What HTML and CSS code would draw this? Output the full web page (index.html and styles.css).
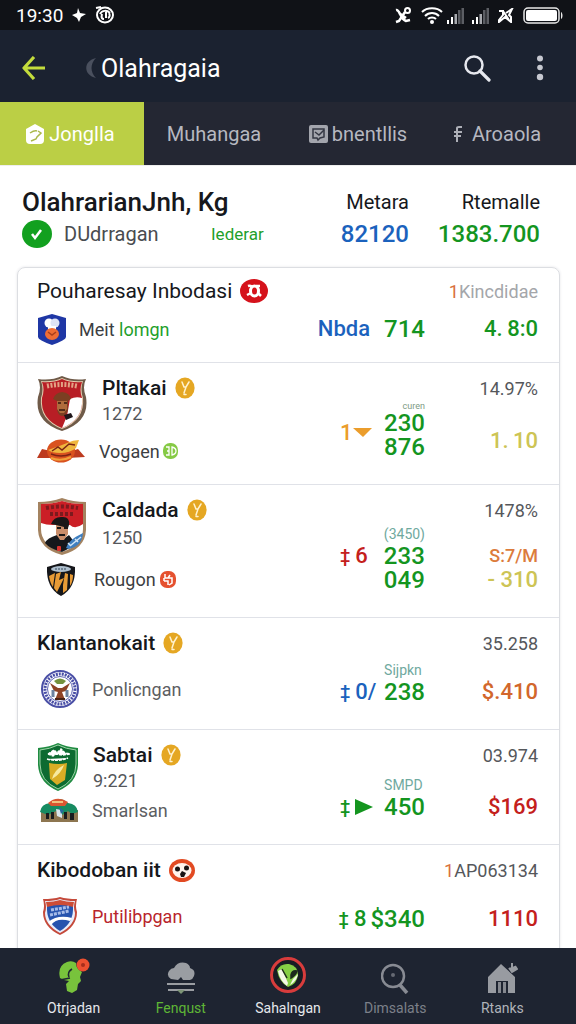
FILE: index.html
```html
<!DOCTYPE html>
<html lang="id">
  <head>
    <meta charset="utf-8"/>
    <meta name="viewport" content="width=device-width, initial-scale=1">
    <title>Olahragaia</title>
    <link rel="stylesheet" href="styles.css">
  </head>
  <body>
    <!-- gold coin used next to the team names -->
    <svg class="defs" width="0" height="0" aria-hidden="true">
      <symbol id="coin" viewBox="0 0 20 22">
        <ellipse cx="10" cy="11" rx="9.6" ry="10.6" fill="#e5a723"/>
        <path d="M7 5l2 5 2 0 3-5M11 10l-2 6M9 17.500h2" fill="none" stroke="#fff2cf" stroke-width="1.500" stroke-linecap="round"/>
      </symbol>
      <symbol id="signal" viewBox="0 0 18 17">
        <path d="M1 13h2v4H1zM5 10h2v7H5z" fill="#fff"/>
        <path d="M8.500 7h2.500v10H8.500z" fill="#a9abb0"/>
        <path d="M12 3h2.500v14H12zM15.500 1H18v16h-2.500z" fill="#5c5e64"/>
      </symbol>
    </svg>

    <div class="status">
      <span class="clock">19:30</span>
      <svg width="14" height="14" viewBox="0 0 14 14"><path d="M6 0l2 5 6 1-5 3-2 5-2-4-5-3 5-2z" fill="#fff"/></svg>
      <svg width="20" height="18" viewBox="0 0 20 18">
        <ellipse cx="10" cy="9" rx="8" ry="7.500" fill="none" stroke="#fff" stroke-width="2"/>
        <path d="M1 2l5-1M5 8c2-4 7-4 10-1M7 8c-1 4 0 5 2 5M11 6v6M14 7c1 2 1 4-1 5" fill="none" stroke="#fff" stroke-width="2"/>
      </svg>
      <span class="spacer"></span>
      <svg width="17" height="17" viewBox="0 0 17 17"><path d="M1 3c4-1 4 9 10 11l4-1M1 15l3-1 6-9M4 6l7 5" fill="none" stroke="#fff" stroke-width="2.500"/><circle cx="12.500" cy="3.500" r="2.500" fill="none" stroke="#fff" stroke-width="2"/></svg>
      <svg width="22" height="17" viewBox="0 0 22 17"><path d="M1 5c5-5 15-5 20 0M4 9c4-4 10-4 14 0M7 12c2-2 6-2 8 0" fill="none" stroke="#fff" stroke-width="2"/><circle cx="11" cy="15" r="2" fill="#fff"/></svg>
      <svg class="sim1" width="18" height="17"><use href="#signal"/></svg>
      <svg width="18" height="17"><use href="#signal"/></svg>
      <svg width="16" height="15" viewBox="0 0 16 15"><path d="M1 3h4v4l-4 5v2l6-5 6 5V9l-2-2 3-6-6 4M5 3l6 9" fill="none" stroke="#fff" stroke-width="2"/></svg>
      <svg width="40" height="17" viewBox="0 0 40 17"><rect x="1" y="1" width="35" height="15" rx="4" fill="none" stroke="#e8e8e8" stroke-width="1.500"/><rect x="3" y="3" width="31" height="11" rx="2" fill="#fff"/><path d="M38 5c2 1 2 6 0 7z" fill="#e8e8e8"/></svg>
    </div>

    <header class="header">
      <button class="icon-btn" aria-label="Kembali">
        <svg width="24" height="24" viewBox="0 0 24 24"><path d="M12 1L2 12l10 11M2 12h21" fill="none" stroke="#c3dc3c" stroke-width="3.200" stroke-linejoin="round"/></svg>
      </button>
      <svg class="crescent" width="12" height="22" viewBox="0 0 12 22"><path d="M11 1C-2 4-2 18 11 21C5 15 5 7 11 1z" fill="#4a505e"/></svg>
      <h1>Olahragaia</h1>
      <button class="icon-btn search" aria-label="Cari">
        <svg width="27" height="27" viewBox="0 0 27 27"><circle cx="10" cy="10" r="8.500" fill="none" stroke="#e6e8ee" stroke-width="2.500"/><path d="M16 16l9 9" stroke="#e6e8ee" stroke-width="3.200" stroke-linecap="round"/></svg>
      </button>
      <button class="icon-btn" aria-label="Menu">
        <svg width="8" height="26" viewBox="0 0 8 26"><g fill="#c6c8d0"><circle cx="4" cy="3.500" r="3"/><circle cx="4" cy="12.500" r="2.800"/><circle cx="4" cy="22" r="3.200"/></g></svg>
      </button>
    </header>

    <nav class="tabs">
      <a href="#" class="tab active">
        <svg width="20" height="20" viewBox="0 0 20 20"><path d="M1 5l9-5 9 5v11q0 4-4 4H5q-4 0-4-4z" fill="#fff"/><path d="M5 9c3-2 5-3 7-2M13 7l3 2-4 4-1 2-5 2" fill="none" stroke="#a9b84a" stroke-width="1.500"/></svg>
        Jonglla
      </a>
      <a href="#" class="tab">Muhangaa</a>
      <a href="#" class="tab">
        <svg width="19" height="18" viewBox="0 0 19 18"><rect width="19" height="18" rx="2" fill="#a3a5ad"/><path d="M4 4h11v8l-4 1-2 2-1-2H4z" fill="none" stroke="#343743" stroke-width="1.500"/><path d="M6 7l4 3 5-5" fill="none" stroke="#343743" stroke-width="1.500"/></svg>
        bnentllis
      </a>
      <a href="#" class="tab wide-gap">
        <svg width="10" height="16" viewBox="0 0 10 16"><path d="M4 16V2q0-1 2-1h3M1 6h8M1 10h7" fill="none" stroke="#adafb7" stroke-width="2"/></svg>
        Aroaola
      </a>
    </nav>

    <main class="main">
      <section class="summary">
        <div class="sum-left">
          <h2>OlahrarianJnh, Kg</h2>
          <div class="sum-sub">
            <svg width="30" height="28" viewBox="0 0 30 28"><ellipse cx="15" cy="14" rx="15" ry="14" fill="#12a01f"/><path d="M10 14l3 4 6-8" fill="none" stroke="#fff" stroke-width="2.500"/></svg>
            <span class="sum-name">DUdrragan</span>
            <span class="tag">Iederar</span>
          </div>
        </div>
        <div class="sum-col">
          <div class="label">Metara</div>
          <div class="num blue">82120</div>
        </div>
        <div class="sum-col last">
          <div class="label">Rtemalle</div>
          <div class="num green">1383.700</div>
        </div>
      </section>

      <section class="card">
        <div class="row">
          <div class="left">
            <h3 class="plain">Pouharesay Inbodasi
              <svg width="28" height="24" viewBox="0 0 28 24"><ellipse cx="14" cy="12" rx="14" ry="12" fill="#d5121b"/><path d="M8 7q3-1 4 1M7 16l4-2M16 7l4 0M18 14l3 3" fill="none" stroke="#fff" stroke-width="2.500"/><ellipse cx="14.500" cy="12" rx="4" ry="5" fill="none" stroke="#fff" stroke-width="3"/></svg>
            </h3>
            <div class="team tight">
              <svg width="30" height="31" viewBox="0 0 30 31"><path d="M15 0l14 4v19q0 3-14 8Q1 26 1 23V4z" fill="#1f37a5"/><circle cx="12" cy="9" r="4.500" fill="#fff"/><circle cx="18" cy="9" r="4.500" fill="#dfe4f5"/><path d="M11 12h8v4h-8z" fill="#fff"/><ellipse cx="15" cy="20" rx="7" ry="6" fill="#ef6d34"/><path d="M11 18l4 3 4-3" fill="none" stroke="#a83e1c" stroke-width="1.500"/></svg>
              <span>Meit <b class="green-text">lomgn</b></span>
            </div>
          </div>
          <div class="mid one"><span class="mark blue">Nbda</span><span class="num green">714</span></div>
          <div class="right">
            <div class="stat faded"><i>1</i>Kincdidae</div>
            <div class="val green">4.&thinsp;8:0</div>
          </div>
        </div>

        <div class="row">
          <div class="left">
            <div class="head">
              <svg width="50" height="55" viewBox="0 0 50 55">
                <path d="M1 3q13 2 24-3q11 5 24 3q-4 8 0 18q4 25-24 34Q-3 46 1 21Q5 11 1 3z" fill="#6f5a48"/>
                <path d="M4 5q12 1 21-3q9 4 21 3q-3 8 0 17q2 22-21 31Q2 44 4 22Q7 13 4 5z" fill="#e5cdb0"/>
                <path d="M5 6q11 1 20-3q9 4 20 3q-3 8 0 16q2 21-20 30Q3 43 5 22Q8 13 5 6z" fill="#b81e25"/>
                <path d="M33 23q6-3 12-1q2 21-20 30l5-12z" fill="#fff"/>
                <path d="M10 10q15-3 30 0" fill="none" stroke="#e2a385" stroke-width="5" stroke-dasharray="2 1.500"/>
                <path d="M16 23q2-6 9-7q8 1 9 7l-3 2v9q-2 6-6 6t-5-7v-8z" fill="#7b3f22"/>
                <path d="M20 25h10v8l-3 4h-4l-3-4z" fill="#b06b3c"/>
                <path d="M21 27h3M27 27h3M22 34h6" stroke="#35180f" stroke-width="1.500"/>
                <path d="M27 39l7-2 2 4-7 3z" fill="#20161a"/>
              </svg>
              <div>
                <h3>Pltakai <svg width="20" height="22"><use href="#coin"/></svg></h3>
                <p>1272</p>
              </div>
            </div>
            <div class="team wide">
              <svg width="48" height="24" viewBox="0 0 48 24"><path d="M0 19l5-9 9 2 2 7zM48 18l-7-8-9 3-2 6z" fill="#bd3b20"/><ellipse cx="24" cy="12" rx="14" ry="11.500" fill="#d9521f"/><path d="M11 11q12-4 19-7 6-3 12-3l-3 8q-6 5-16 5-8 0-12-3z" fill="#efb63f"/><path d="M15 12l6-4 4 3 7-6 6 1M14 15q10 4 20 0" fill="none" stroke="#7c2415" stroke-width="1.500"/><path d="M14 19q10 4 20-1" fill="none" stroke="#f2a03a" stroke-width="2"/></svg>
              <span>Vogaen</span>
              <svg class="dot" width="15" height="16" viewBox="0 0 15 16"><rect width="15" height="16" rx="7" fill="#86ca45"/><path d="M3 4h3v8H3M4 8h2M9 4v8q4-1 4-4t-4-4z" fill="none" stroke="#fff" stroke-width="1.300"/></svg>
            </div>
          </div>
          <div class="mid">
            <span class="mark orange">1<svg width="19" height="10" viewBox="0 0 19 10"><path d="M0 0h19L10 9z" fill="#eb9d2c"/></svg></span>
            <div class="nums"><small class="tiny">curen</small><span class="num green">230</span><span class="num green">876</span></div>
          </div>
          <div class="right">
            <div class="stat">14.97%</div>
            <div class="val lime tall">1.&thinsp;10</div>
          </div>
        </div>

        <div class="row">
          <div class="left">
            <div class="head">
              <svg width="50" height="57" viewBox="0 0 50 57">
                <path d="M1 4Q14 4 25 0q11 4 24 4v28q-1 19-24 25Q2 51 1 32z" fill="#a48360"/>
                <path d="M4 6q12 0 21-3q9 3 21 3v25q0 16-21 23Q4 47 4 31z" fill="#fff"/>
                <path d="M4 6q12 0 21-3q9 3 21 3v20q-8 6-13 1-14-1-17 0-7 0-12-2z" fill="#cb1f26"/>
                <path d="M9 10q16-3 32 0M13 16h25" fill="none" stroke="#7c1a1e" stroke-width="4" stroke-dasharray="3 2"/>
                <path d="M8 45q2-5 12-8l5 5 7-5 6 8q-4 5-13 9Q13 51 8 45z" fill="#15171b"/>
                <path d="M19 26h12v10l-4 6h-4l-4-6z" fill="#c98d6a"/>
                <path d="M14 26q3-8 12-7 7 0 6 8l-1 3-12-3z" fill="#1a1718"/>
                <path d="M20 30h4M27 30h4M22 37h6" stroke="#1a1718" stroke-width="2"/>
                <path d="M29 50q2-8 17-15-1 13-14 16z" fill="#3f7fc0"/><path d="M33 48l11-9M31 45l3 3M38 41l3 3" stroke="#d3e6f5" stroke-width="1.500"/>
                <rect x="20" y="48" width="4" height="5" rx="1" fill="#d9332f"/>
              </svg>
              <div>
                <h3>Caldada <svg width="20" height="22"><use href="#coin"/></svg></h3>
                <p class="low">1250</p>
              </div>
            </div>
            <div class="team">
              <svg width="48" height="33" viewBox="0 0 48 33"><path d="M24 0l14 4q1 21-14 29Q9 25 10 4z" fill="#15161a"/><path d="M12 13l6-3-2 14q-3-4-4-11zM19 11l5-2-2 8 5-2-7 14-3-4zM28 10l3 1-1 16-4 3v-8zM33 11l3 1q0 7-3 11z" fill="#e79b36"/><ellipse cx="24" cy="6" rx="10" ry="3" fill="#aebfce"/><path d="M18 6h12" stroke="#34495b" stroke-dasharray="2 1"/></svg>
              <span>Rougon</span>
              <svg class="dot" width="16" height="17" viewBox="0 0 16 17"><rect width="16" height="17" rx="7" fill="#e5512f"/><path d="M5 3v4h4M4 10h4v4M10 4l-2 3h4v5l-3 2M4 7v3" fill="none" stroke="#fff" stroke-width="1.500"/></svg>
            </div>
          </div>
          <div class="mid">
            <span class="mark red high"><small>‡</small>6</span>
            <div class="nums"><small>(3450)</small><span class="num green">233</span><span class="num green">049</span></div>
          </div>
          <div class="right">
            <div class="stat">1478%</div>
            <div><div class="val amber">S:7/M</div><div class="val lime">- 310</div></div>
          </div>
        </div>

        <div class="row">
          <div class="left">
            <h3 class="plain">Klantanokait <svg width="20" height="22"><use href="#coin"/></svg></h3>
            <div class="team">
              <svg width="46" height="38" viewBox="0 0 46 38"><circle cx="23" cy="19" r="18" fill="#fff" stroke="#4a4fa6" stroke-width="2"/><circle cx="23" cy="19" r="15" fill="none" stroke="#4a4fa6" stroke-width="3" stroke-dasharray="2 1"/><circle cx="23" cy="19" r="12.500" fill="#fff" stroke="#6268b5"/><path d="M17 11q6-5 12 0l-3 3h-6z" fill="#75923e"/><path d="M13 13l8 5h4l8-5-4 8-4 1 3 8H18l3-8-4-1z" fill="#8e4326"/><path d="M16 20v7M30 20v7" stroke="#6d83a1" stroke-width="3"/><path d="M18 29h10" stroke="#492315" stroke-width="2"/></svg>
              <span class="grey">Ponlicngan</span>
            </div>
          </div>
          <div class="mid">
            <span class="mark blue"><small>‡</small>0/</span>
            <div class="nums"><small>Sijpkn</small><span class="num green">238</span></div>
          </div>
          <div class="right">
            <div class="stat">35.258</div>
            <div class="val amber-dark">$.410</div>
          </div>
        </div>

        <div class="row">
          <div class="left">
            <div class="head short">
              <svg width="42" height="48" viewBox="0 0 42 48">
                <path d="M1 5Q13 4 21 0q8 4 20 5v17q-1 18-20 26Q2 40 1 22z" fill="#1f8b41"/>
                <path d="M3 7q10-1 18-5q8 4 18 5v14q0 17-18 25Q3 38 3 21z" fill="#0d6b31" stroke="#9ed3a8"/>
                <path d="M11 11l6-4 3 3 4-4 4 4 5 1-8 1-6-1-3 2zM10 16q11 3 21-1" fill="#fff" stroke="#fff" stroke-width="1.500" stroke-dasharray="3 1"/>
                <path d="M12 20q10 2 18 0l-2 17-8 5-7-6z" fill="#d9ad25"/><path d="M27 22q-10 5-12 14 9-5 12-14z" fill="#f7e9a0"/>
              </svg>
              <div>
                <h3>Sabtai <svg width="20" height="22"><use href="#coin"/></svg></h3>
                <p>9:221</p>
              </div>
            </div>
            <div class="team">
              <svg width="46" height="25" viewBox="-2 0 46 25"><path d="M2 12h37v12H2z" fill="#8d7650"/><path d="M1 14Q2 6 11 5q9-8 18 0 9 1 10 9l-6 2-4-3-6 4-6-4-8 4z" fill="#178b61"/><path d="M9 5q9-8 20-1l-3 4H12z" fill="#db5631"/><path d="M13 4h11" stroke="#f0c27e" stroke-width="2"/><path d="M17 11l6 1v8l-5-2z" fill="#d8e5ed"/><path d="M7 15h3v6H7zM12 14h3v7h-3zM25 14h3v7h-3zM31 15h4v7h-4z" fill="#191c1e"/><path d="M20 9l5 4-3 3z" fill="#286b9d"/></svg>
              <span class="grey">Smarlsan</span>
            </div>
          </div>
          <div class="mid">
            <span class="mark green"><small>‡</small><svg width="18" height="16" viewBox="0 0 18 16"><path d="M0 0l18 8L0 16z" fill="#14951f"/></svg></span>
            <div class="nums"><small>SMPD</small><span class="num green">450</span></div>
          </div>
          <div class="right">
            <div class="stat">03.974</div>
            <div class="val red">$169</div>
          </div>
        </div>

        <div class="row">
          <div class="left">
            <h3 class="plain">Kibodoban iit
              <svg width="26" height="23" viewBox="0 0 26 23"><ellipse cx="13" cy="11.500" rx="13" ry="11.500" fill="#e24a22"/><ellipse cx="13" cy="11.500" rx="9.500" ry="7.500" fill="#fff4ed"/><circle cx="8.500" cy="10" r="2.500" fill="#191313"/><circle cx="17.500" cy="9" r="2.500" fill="#191313"/><path d="M11 15l2-3 4 2-2 4h-3z" fill="#191313"/></svg>
            </h3>
            <div class="team">
              <svg width="46" height="38" viewBox="0 0 46 38"><path d="M6 2q10 0 17-2 7 2 17 2-2 7 0 13 0 15-17 23Q6 30 6 15 8 9 6 2z" fill="#c54a3b"/><path d="M8 4q9 0 15-2 6 2 15 2-2 6 0 12 0 12-15 20Q8 28 8 16 10 10 8 4z" fill="#e8edfa"/><path d="M10 9q13-3 26 0 1 17-13 25Q9 26 10 9z" fill="#2653ae"/><path d="M9 5q8 0 14-2 6 2 14 2l-1 5q-13-4-26 0z" fill="#cd4d36"/><path d="M14 13l18-3M13 18l19-4" stroke="#a7bce8" stroke-width="3" stroke-dasharray="3 1"/><path d="M11 25q10-8 24-4l-2 3q-13-4-19 4z" fill="#fff"/></svg>
              <span class="crimson">Putilibpgan</span>
            </div>
          </div>
          <div class="mid one close"><span class="mark green"><small>‡</small>8</span><span class="num green">$340</span></div>
          <div class="right">
            <div class="stat"><i>1</i>AP063134</div>
            <div class="val red">1110</div>
          </div>
        </div>
      </section>
    </main>

    <nav class="bottom">
      <a href="#">
        <svg width="32" height="36" viewBox="0 0 32 36"><path d="M2 20Q-1 8 9 4q5-2 9 1 0 6 6 9l-2 5 1 4-3 3-1 6-5 3-5-2-1-7 3-3-5-1z" fill="#78c33c"/><path d="M14 11q-5 3-3 8M2 22l10-2" fill="none" stroke="#1e2633" stroke-width="1.500"/><circle cx="25" cy="7" r="6.500" fill="#ec5030"/><circle cx="25" cy="7" r="2" fill="#a72e1c"/></svg>
        Otrjadan
      </a>
      <a href="#" class="lit">
        <svg width="28" height="32" viewBox="0 0 28 32"><path d="M4 17q-5-3-2-8 2-3 5-3 4-7 12-5 4 2 4 5 6 2 4 8-1 3-4 4h-7l-2-3-3 3z" fill="#9a9da2"/><path d="M0 22h28M1 28h26" stroke="#9a9da2" stroke-width="2"/><path d="M10 28h8l-4 4z" fill="#7d9476"/></svg>
        Fenqust
      </a>
      <a href="#">
        <svg width="38" height="38" viewBox="0 0 38 38"><circle cx="19" cy="19" r="16.500" fill="#191d24" stroke="#d83c3c" stroke-width="3"/><path d="M8 14q4-7 12-6 9 2 9 11-1 9-10 12-9-5-11-17z" fill="#86cf45"/><path d="M9 15l4-2 6 14-1 3q-7-5-9-15z" fill="#f4f8e8"/><path d="M21 29q7-4 8-11l-5 5z" fill="#f4f8e8"/><path d="M13 13l5 9M22 19q1-5 6-4-1 4-6 7z" fill="#1c2a1c" stroke="#1c2a1c" stroke-width="1.500"/></svg>
        Sahalngan
      </a>
      <a href="#" class="dim">
        <svg width="28" height="31" viewBox="0 0 28 31"><circle cx="12" cy="13" r="11" fill="none" stroke="#888b93" stroke-width="2.500"/><circle cx="12" cy="12" r="2" fill="#666a73"/><path d="M19 22l7 8" stroke="#888b93" stroke-width="3.500"/></svg>
        Dimsalats
      </a>
      <a href="#" class="soft">
        <svg width="31" height="31" viewBox="0 0 31 31"><path d="M1 14L14 1l14 13v16h-7V18H9v12H1z" fill="#989ba1"/><path d="M11 19h3v11h-3zM16 19h3v11h-3z" fill="#85888f"/><path d="M25 0v8M22 5l3 4 5-3-2-3" fill="#989ba1" stroke="#989ba1" stroke-width="2"/></svg>
        Rtanks
      </a>
    </nav>
  </body>
</html>
```

FILE: styles.css
```css
html, body {
  height: 100%;
  margin: 0;
}
body {
  display: flex;
  flex-direction: column;
  background-color: #fff;
  color: #16181c;
  font-family: Roboto, "Liberation Sans", sans-serif;
}
svg {
  display: block;
  flex: none;
}
.defs {
  position: absolute;
}
a {
  color: inherit;
  text-decoration: none;
}
h1, h2, h3, p {
  margin: 0;
  font-weight: 500;
}

/* status bar */
.status {
  display: flex;
  flex: none;
  align-items: center;
  gap: 9px;
  height: 30px;
  padding: 0 13px 0 16px;
  background-color: #101217;
  color: #fff;
}
.clock {
  font-size: 19px;
}
.spacer {
  flex: 1;
}
.sim1 {
  margin: 0 -2px 0 -6px;
}

/* header */
.header {
  display: flex;
  flex: none;
  align-items: center;
  height: 68px;
  padding: 4px 32px 0 22px;
  background-color: #1b2230;
  color: #fff;
}
.header h1 {
  flex: 1;
  font-size: 25px;
  font-weight: 400;
}
.icon-btn {
  padding: 0;
  border: 0;
  background: none;
  cursor: pointer;
}
.crescent {
  margin: 0 4px 0 39px;
}
.search {
  margin-right: 45px;
}
.tabs {
  display: flex;
  flex: none;
  height: 63px;
  background-color: #242733;
  border-bottom: #eee 1px solid;
}
.tab {
  display: flex;
  align-items: center;
  justify-content: center;
  box-sizing: border-box;
  gap: 4px;
  width: 25%;
  padding-right: 4px;
  color: #b6b8c0;
  font-size: 20px;
}
.tab.wide-gap {
  gap: 9px;
  padding-right: 14px;
}
.tab.active {
  background-color: #bbcf45;
  color: #fff;
}

/* summary */
.main {
  flex: 1;
  min-height: 0;
  overflow: hidden;
}
.summary {
  display: flex;
  padding: 22px 36px 15px 22px;
}
.sum-left {
  flex: 1;
}
.summary h2 {
  font-size: 26px;
  line-height: 28px;
  white-space: nowrap;
}
.sum-sub {
  display: flex;
  align-items: center;
  height: 36px;
  color: #4a4c50;
  font-size: 20px;
}
.sum-name {
  width: 147px;
  margin-left: 12px;
}
.tag {
  color: #1fa02c;
  font-size: 17px;
}
.sum-col {
  text-align: right;
}
.sum-col.last {
  width: 131px;
}
.label {
  font-size: 20px;
  line-height: 28px;
}
.sum-col .num {
  line-height: 36px;
}
.num {
  font-size: 24px;
  font-weight: 500;
  line-height: 24px;
}
.green { color: #14951f; }
.blue { color: #1b62bd; }
.red { color: #c4201c; }
.orange { color: #eb9d2c; }
.lime { color: #cdc455; }
.amber { color: #dc7c3c; }
.amber-dark { color: #d2672c; }

/* list */
.card {
  margin: 0 16px 0 17px;
  border: #dcdee2 1px solid;
  border-radius: 8px;
  box-shadow: 0 0 3px #e4e4e8;
}
.row {
  display: flex;
  padding: 13px 21px 21px 19px;
  border-bottom: #e0e2e8 1px solid;
}
.row:first-child {
  padding-top: 11px;
  padding-bottom: 17px;
}
.left {
  flex: 1;
}
.left h3 {
  display: flex;
  align-items: center;
  gap: 8px;
  font-size: 21px;
  line-height: 24px;
  white-space: nowrap;
}
.left h3.plain {
  margin-bottom: 15px;
}
.row:first-child h3 {
  margin-bottom: 11px;
  font-weight: 400;
}
.head {
  display: flex;
  gap: 15px;
  margin-bottom: 8px;
}
.head.short {
  gap: 14px;
  margin-bottom: 3px;
}
.head p {
  color: #55575b;
  font-size: 18px;
  font-weight: 400;
  line-height: 28px;
}
.head p.low {
  line-height: 32px;
}
.team {
  display: flex;
  align-items: center;
  gap: 9px;
  color: #3c3e42;
  font-size: 18px;
}
.team.tight {
  gap: 12px;
}
.team.wide {
  gap: 14px;
}
.team .dot {
  margin-left: -5px;
}
.team.wide .dot {
  margin-left: -11px;
}
.team .grey {
  color: #5c5e62;
}
.team .crimson {
  color: #b8252c;
}
.green-text {
  color: #1fa02c;
  font-weight: 400;
}
.mid {
  display: flex;
  align-items: flex-end;
  justify-content: space-between;
  width: 85px;
  padding-bottom: 4px;
}
.mid.one {
  width: auto;
  gap: 14px;
}
.mid.close {
  gap: 4px;
}
.mark {
  display: flex;
  align-items: center;
  gap: 5px;
  font-size: 22px;
  font-weight: 500;
  line-height: 24px;
}
.mark small {
  font-size: 18px;
}
.mark.high {
  padding-bottom: 24px;
}
.mark.orange {
  gap: 0;
  padding-bottom: 14px;
}
.nums {
  display: flex;
  flex-direction: column;
}
.nums small {
  color: #6fa99e;
  font-size: 14px;
  line-height: 20px;
}
.nums .tiny {
  color: #7d9a84;
  font-size: 9px;
  line-height: 10px;
  text-align: right;
}
.right {
  display: flex;
  flex-direction: column;
  justify-content: space-between;
  width: 113px;
  padding-bottom: 4px;
  text-align: right;
}
.stat {
  color: #55575b;
  font-size: 18px;
  line-height: 26px;
}
.stat.faded {
  color: #a4a6aa;
}
.stat i {
  color: #d9713c;
  font-style: normal;
}
.val {
  font-size: 22px;
  font-weight: 500;
  line-height: 24px;
}
.val.tall {
  line-height: 36px;
}
.val.amber {
  font-size: 18px;
}

/* bottom bar */
.bottom {
  display: flex;
  flex: none;
  height: 76px;
  padding: 0 20px;
  background-color: #1e2431;
  color: #e6e8ec;
  font-size: 14px;
}
.bottom a {
  display: flex;
  flex: 1;
  flex-direction: column;
  align-items: center;
  justify-content: flex-end;
  gap: 6px;
  padding-bottom: 8px;
}
.bottom .lit { color: #5fb636; }
.bottom .dim { color: #7c8089; }
.bottom .soft { color: #b0b3b9; }
```
